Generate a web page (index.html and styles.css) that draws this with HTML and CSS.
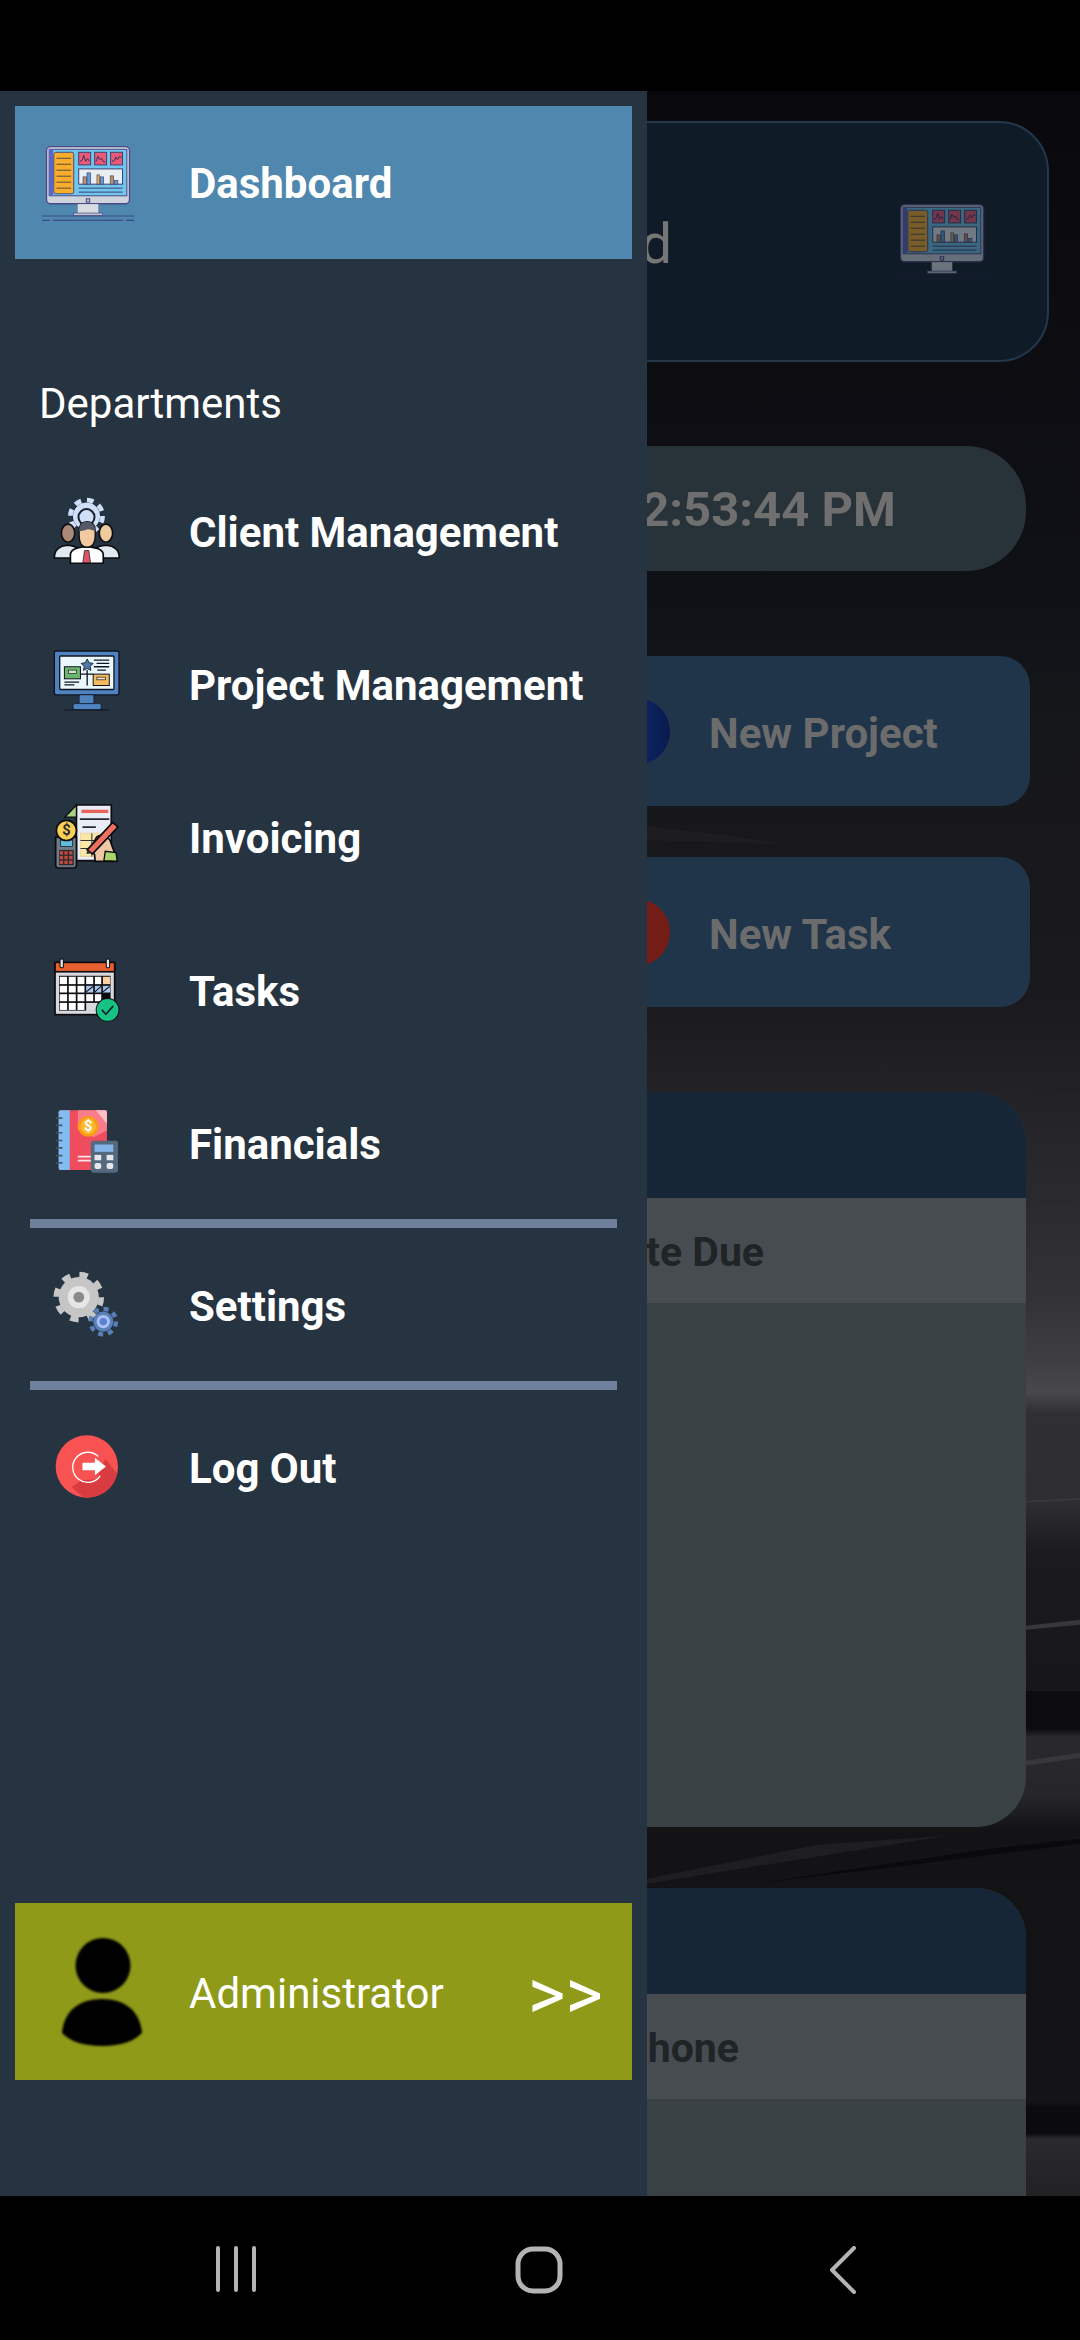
FILE: index.html
```html
<!DOCTYPE html>
<html lang="en">
<head>
<meta charset="utf-8">
<title>Dashboard</title>
<link rel="stylesheet" href="styles.css">
</head>
<body>
<svg class="defs" width="0" height="0" aria-hidden="true">
  <symbol id="ic-dashboard" viewBox="30 40 285 235">
    <rect x="46" y="45" width="250" height="172" rx="12" fill="#cfd3dc" stroke="#4a4a86" stroke-width="4"/>
    <rect x="54" y="53" width="234" height="140" fill="#6fc6ee" stroke="#4a4a86" stroke-width="3"/>
    <rect x="54" y="53" width="12" height="140" fill="#5f63c6"/>
    <rect x="68" y="62" width="60" height="125" rx="6" fill="#f8ae2a" stroke="#4a4a86" stroke-width="3"/>
    <g stroke="#5a4a40" stroke-width="3"><path d="M76 80h44M76 98h44M76 116h44M76 134h44M76 152h44M76 170h44"/></g>
    <g fill="#ec5a78" stroke="#3f3f70" stroke-width="3">
      <rect x="143" y="62" width="36" height="38"/><rect x="191" y="62" width="36" height="38"/><rect x="239" y="62" width="36" height="38"/>
    </g>
    <g fill="none" stroke="#30305f" stroke-width="3">
      <path d="M147 90l7-5 4-14 6 18 6-8 5 8M195 90l6-16 6 10 5-4 5 10 6 1M243 90l8-4 4-10 5 8 6-10 6 4"/>
    </g>
    <rect x="143" y="112" width="132" height="46" fill="#e8eef2" stroke="#3f3f70" stroke-width="3"/>
    <rect x="156" y="136" width="10" height="22" fill="#c09060" stroke="#3f3f70" stroke-width="2"/>
    <rect x="168" y="124" width="11" height="34" fill="#5f9bd8" stroke="#3f3f70" stroke-width="2"/>
    <rect x="198" y="130" width="8" height="28" fill="#f0b040" stroke="#3f3f70" stroke-width="2"/>
    <rect x="209" y="136" width="9" height="22" fill="#5f9bd8" stroke="#3f3f70" stroke-width="2"/>
    <rect x="238" y="133" width="10" height="25" fill="#c09060" stroke="#3f3f70" stroke-width="2"/>
    <rect x="251" y="147" width="10" height="11" fill="#5f9bd8" stroke="#3f3f70" stroke-width="2"/>
    <path d="M143 170h132M143 182h132" stroke="#3f3f70" stroke-width="3"/>
    <rect x="166" y="202" width="10" height="10" fill="none" stroke="#3f3f70" stroke-width="3"/>
    <rect x="140" y="218" width="62" height="27" fill="#d8dbe2"/>
    <rect x="127" y="245" width="88" height="8" fill="#bfc3cc" stroke="#4a4a86" stroke-width="2"/>
    <path class="ground" d="M33 254h277M33 267h24M66 267h210M285 267h25" stroke-width="3.5"/>
  </symbol>
</svg>

<div class="phone">
  <div class="status-bar"></div>

  <main class="stage">
    <svg class="wallpaper" viewBox="0 91 1080 2104" preserveAspectRatio="none" aria-hidden="true">
      <defs>
        <linearGradient id="wall" x1="0" y1="91" x2="0" y2="2195" gradientUnits="userSpaceOnUse">
          <stop offset="0" stop-color="#09090d"/>
          <stop offset=".24" stop-color="#101116"/>
          <stop offset=".29" stop-color="#15161a"/>
          <stop offset=".43" stop-color="#1a1a1e"/>
          <stop offset=".48" stop-color="#232327"/>
          <stop offset=".575" stop-color="#333337"/>
          <stop offset=".603" stop-color="#3f3f43"/>
          <stop offset=".618" stop-color="#48484c"/>
          <stop offset=".628" stop-color="#303034"/>
          <stop offset=".67" stop-color="#2e2e32"/>
          <stop offset=".695" stop-color="#1b1b1e"/>
          <stop offset=".76" stop-color="#17171a"/>
          <stop offset=".76" stop-color="#0c0c0f"/>
          <stop offset=".778" stop-color="#0c0c0f"/>
          <stop offset=".782" stop-color="#2a2a2e"/>
          <stop offset=".81" stop-color="#26262a"/>
          <stop offset=".826" stop-color="#131316"/>
          <stop offset=".955" stop-color="#141416"/>
          <stop offset=".958" stop-color="#0b0b0e"/>
          <stop offset=".97" stop-color="#0b0b0e"/>
          <stop offset=".973" stop-color="#2a2a2d"/>
          <stop offset="1" stop-color="#222225"/>
        </linearGradient>
      </defs>
      <rect x="0" y="91" width="1080" height="2104" fill="url(#wall)"/>
      <path d="M647 826l90 10 50 8-140-4z" fill="#1d1d21"/>
      <path d="M780 1062l110 3 190 22v5l-150-16z" fill="#212125"/>
      <path d="M647 1878l170-34 130-9-300 48z" fill="#1e1e22"/>
      <path d="M760 1882l230-34 90-10v5l-200 25z" fill="#0a0a0d"/>
      <path d="M1026 1625l54-6v5l-54 5zM1026 1500l54-3v2l-54 3zM1026 1760l54-8v5l-54 8z" fill="#38383c"/>
      <path d="M1026 1200l54-6v6l-54 6zM1026 2150l54-5v3l-54 4z" fill="#2a2a2e"/>
    </svg>

    <div class="content">
      <section class="hero">
        <span class="hero-title">Dashboard</span>
        <svg class="hero-icon"><use href="#ic-dashboard"/></svg>
      </section>

      <div class="clock"><span>12:53:44 PM</span></div>

      <div class="action">
        <span class="action-dot action-dot-blue"></span>
        <span class="action-label">New Project</span>
      </div>
      <div class="action">
        <span class="action-dot action-dot-red"></span>
        <span class="action-label">New Task</span>
      </div>

      <section class="table table-tasks">
        <div class="table-head"></div>
        <div class="table-cols table-cols-date"><span>Date Due</span></div>
        <div class="table-body"></div>
      </section>

      <section class="table table-clients">
        <div class="table-head"></div>
        <div class="table-cols table-cols-phone"><span>Phone</span></div>
        <div class="table-body"></div>
      </section>
    </div>

    <nav class="drawer">
      <a class="item item-active">
        <svg class="icon-dashboard"><use href="#ic-dashboard"/></svg>
        <span>Dashboard</span>
      </a>

      <h2 class="drawer-title">Departments</h2>

      <a class="item">
        <svg class="icon" viewBox="70 48 200 200">
          <circle cx="170" cy="105" r="42" fill="#cfe0f8" stroke="#1c2130" stroke-width="3"/>
          <circle cx="170" cy="105" r="48" fill="none" stroke="#cfe0f8" stroke-width="14" stroke-dasharray="20 17.7"/>
          <circle cx="170" cy="108" r="24" fill="none" stroke="#1c2130" stroke-width="6"/>
          <path d="M74 230c0-24 14-36 40-38 26 2 44 14 44 38z" fill="#dfe9ee" stroke="#0c0c10" stroke-width="5"/>
          <path d="M182 230c0-24 20-36 46-38 26 2 40 14 40 38z" fill="#dfe9ee" stroke="#0c0c10" stroke-width="5"/>
          <ellipse cx="115" cy="156" rx="20" ry="27" fill="#a98a78" stroke="#0c0c10" stroke-width="5"/>
          <ellipse cx="228" cy="156" rx="20" ry="27" fill="#eecb9c" stroke="#0c0c10" stroke-width="5"/>
          <path d="M122 246v-26c0-14 20-22 48-24 28 2 50 10 50 24v26z" fill="#fff" stroke="#0c0c10" stroke-width="5"/>
          <path d="M164 208h13l5 36h-23z" fill="#d9566a" stroke="#0c0c10" stroke-width="2"/>
          <path d="M148 150c0-18 8-28 24-28s24 10 24 28v14c0 22-10 34-24 34s-24-12-24-34z" fill="#f2c9a0" stroke="#0c0c10" stroke-width="4"/>
          <path d="M148 150c0-18 8-28 24-28s24 10 24 28l-12-4-10-2-12 4z" fill="#555a66"/>
        </svg>
        <span>Client Management</span>
      </a>

      <a class="item">
        <svg class="icon" viewBox="70 518 200 200">
          <rect x="74" y="521" width="193" height="131" rx="6" fill="#4f83c0" stroke="#101420" stroke-width="4"/>
          <rect x="90" y="536" width="162" height="100" rx="3" fill="#eaf8fe" stroke="#101420" stroke-width="4"/>
          <rect x="104" y="568" width="48" height="36" fill="#6cb66e" stroke="#101420" stroke-width="3"/>
          <rect x="116" y="578" width="24" height="10" fill="#cfe8c8" stroke="#101420" stroke-width="2"/>
          <rect x="190" y="590" width="48" height="34" fill="#f5ba5c" stroke="#101420" stroke-width="3"/>
          <rect x="201" y="599" width="26" height="8" fill="#fbe4b8" stroke="#101420" stroke-width="2"/>
          <path d="M172 545l6 11 12 2-9 9 2 12-11-6-11 6 2-12-9-9 12-2z" fill="#4e7aa7" stroke="#101420" stroke-width="2.5"/>
          <path d="M172 578v46M152 590h38M192 548h46M200 558h38M192 568h46M202 578h26M104 614h44M104 622h30" stroke="#101420" stroke-width="4" fill="none"/>
          <rect x="148" y="652" width="44" height="26" fill="#4f83c0" stroke="#101420" stroke-width="2"/>
          <rect x="130" y="678" width="84" height="18" rx="6" fill="#4f83c0" stroke="#101420" stroke-width="2"/>
          <path d="M105 697h132" stroke="#101420" stroke-width="3"/>
        </svg>
        <span>Project Management</span>
      </a>

      <a class="item">
        <svg class="icon" viewBox="70 68 200 200">
          <path d="M140 74h104v166h-104z" fill="#e9eef6" stroke="#0c0c10" stroke-width="5"/>
          <path d="M140 74l-34 36h34z" fill="#a8d080" stroke="#0c0c10" stroke-width="4"/>
          <rect x="155" y="88" width="80" height="10" fill="#e8645a"/>
          <path d="M150 116h88M158 140h40" stroke="#2a2a30" stroke-width="5"/>
          <rect x="152" y="158" width="66" height="70" fill="#fbe8a8" stroke="#e8d090" stroke-width="2"/>
          <path d="M152 180h66M152 204h66M186 158v70" stroke="#30303a" stroke-width="3"/>
          <path d="M78 170h62v84q0 8-8 8H86q-8 0-8-8z" fill="#717b88" stroke="#0c0c10" stroke-width="5"/>
          <rect x="92" y="178" width="36" height="20" fill="#63bce0" stroke="#0c0c10" stroke-width="2"/>
          <rect x="88" y="208" width="44" height="46" fill="#2e2a30"/>
          <g fill="#c04a3e"><rect x="90" y="212" width="10" height="10"/><rect x="104" y="212" width="10" height="10"/><rect x="118" y="212" width="10" height="10"/><rect x="90" y="226" width="10" height="10"/><rect x="104" y="226" width="10" height="10"/><rect x="118" y="226" width="10" height="10"/><rect x="90" y="240" width="10" height="10"/><rect x="104" y="240" width="10" height="10"/><rect x="118" y="240" width="10" height="10"/></g>
          <circle cx="110" cy="150" r="30" fill="#fbd155" stroke="#0c0c10" stroke-width="5"/>
          <text class="coin" x="110" y="164" text-anchor="middle">$</text>
          <path d="M200 170c14-12 40-2 44 20 6 20 14 30 18 52h-66l-2-20-12-18z" fill="#efc9a6" stroke="#0c0c10" stroke-width="5"/>
          <path d="M222 240l4-28 32 4 4 26z" fill="#a8d66c" stroke="#0c0c10" stroke-width="4"/>
          <path d="M172 208l76-82 16 14-76 80z" fill="#ef7060" stroke="#0c0c10" stroke-width="5"/>
          <path d="M172 208l-2 12 16-2z" fill="#30303a"/>
        </svg>
        <span>Invoicing</span>
      </a>

      <a class="item">
        <svg class="icon" viewBox="70 525 200 200">
          <rect x="76" y="548" width="178" height="152" fill="#d8dae0" stroke="#0c0c10" stroke-width="5"/>
          <rect x="76" y="544" width="178" height="28" fill="#e8602f" stroke="#0c0c10" stroke-width="5"/>
          <rect x="91" y="534" width="10" height="26" rx="4" fill="#e6e6e6" stroke="#0c0c10" stroke-width="3"/>
          <rect x="229" y="534" width="10" height="26" rx="4" fill="#e6e6e6" stroke="#0c0c10" stroke-width="3"/>
          <rect x="88" y="584" width="154" height="104" fill="#0c0c10"/>
          <g fill="#fff">
            <rect x="90" y="587" width="22" height="22"/><rect x="117" y="587" width="21" height="22"/><rect x="143" y="587" width="21" height="22"/><rect x="169" y="587" width="21" height="22"/><rect x="195" y="587" width="19" height="22"/>
            <rect x="90" y="614" width="22" height="20"/><rect x="117" y="614" width="21" height="20"/><rect x="143" y="614" width="21" height="20"/>
            <rect x="90" y="639" width="22" height="21"/><rect x="117" y="639" width="21" height="21"/><rect x="143" y="639" width="21" height="21"/><rect x="169" y="639" width="21" height="21"/><rect x="195" y="639" width="19" height="21"/>
            <rect x="90" y="665" width="22" height="21"/><rect x="117" y="665" width="21" height="21"/><rect x="143" y="665" width="21" height="21"/>
          </g>
          <rect x="219" y="587" width="22" height="22" fill="#fbd0a4"/>
          <g fill="#a8c8ee">
            <rect x="169" y="614" width="21" height="20"/><rect x="195" y="614" width="19" height="20"/><rect x="219" y="614" width="22" height="20"/>
          </g>
          <path d="M169 632l20-16M195 632l18-16M219 632l20-16" stroke="#0c0c10" stroke-width="3"/>
          <rect x="169" y="665" width="50" height="24" fill="#d8dae0"/>
          <circle cx="233" cy="686" r="34" fill="#16c383" stroke="#0c0c10" stroke-width="3"/>
          <path d="M216 686l12 13 22-25" fill="none" stroke="#123" stroke-width="5"/>
        </svg>
        <span>Tasks</span>
      </a>

      <a class="item">
        <svg class="icon" viewBox="70 58 200 200">
          <rect x="87" y="62" width="144" height="178" rx="6" fill="#ef4d5d"/>
          <path d="M93 62h27v178h-27q-6 0-6-6V68q0-6 6-6z" fill="#81bdf0"/>
          <path d="M144 62h81q6 0 6 6v54l-40 20-47-24z" fill="#f77d8a"/>
          <path d="M198 62h27q6 0 6 6v34z" fill="#fbc0c6"/>
          <path d="M80 85h18M80 107h18M80 129h18M80 152h18M80 174h18M80 197h18M80 219h18" stroke="#465a6e" stroke-width="5"/>
          <circle cx="175" cy="110" r="31" fill="#fb9c14"/>
          <circle cx="175" cy="110" r="23" fill="#fdb92c"/>
          <text class="coin coin-light" x="175" y="124" text-anchor="middle">$</text>
          <path d="M144 200h42M144 212h42" stroke="#ffe6ea" stroke-width="5"/>
          <rect x="183" y="153" width="81" height="95" rx="8" fill="#54697d"/>
          <rect x="194" y="164" width="56" height="22" fill="#82b4e8"/>
          <g fill="#e4e8ec"><rect x="194" y="195" width="20" height="16"/><rect x="230" y="195" width="20" height="16"/><rect x="194" y="219" width="20" height="18" rx="6"/><rect x="230" y="219" width="20" height="18" rx="6"/></g>
        </svg>
        <span>Financials</span>
      </a>

      <hr class="rule rule-tight">

      <a class="item item-settings">
        <svg class="icon" viewBox="70 30 200 200">
          <circle cx="147" cy="108" r="60" fill="#c6c6c6"/>
          <circle cx="147" cy="108" r="67" fill="none" stroke="#c6c6c6" stroke-width="17" stroke-dasharray="25 27.6"/>
          <circle cx="147" cy="108" r="33" fill="#e6e6e6"/>
          <circle cx="147" cy="108" r="16" fill="#8a8a8a"/>
          <circle cx="220" cy="181" r="30" fill="#5a80b8"/>
          <circle cx="220" cy="181" r="38" fill="none" stroke="#5a80b8" stroke-width="13" stroke-dasharray="15 14.8"/>
          <circle cx="220" cy="181" r="20" fill="#a9c0f5"/>
          <circle cx="220" cy="181" r="11" fill="#5c80d0"/>
        </svg>
        <span>Settings</span>
      </a>

      <hr class="rule">

      <a class="item item-last">
        <svg class="icon" viewBox="70 518 200 200">
          <circle cx="171" cy="618" r="93" fill="#f85252"/>
          <path d="M200 655l-44 4-30 20 34 31c52 4 90-22 102-70l-36-45z" fill="#d93c40"/>
          <path d="M205 588a45 45 0 1 0 6 58" fill="none" stroke="#fff" stroke-width="4"/>
          <path d="M158 607h37v-15l33 26-33 26v-15h-37z" fill="#fff"/>
        </svg>
        <span>Log Out</span>
      </a>

      <a class="account">
        <svg class="avatar" viewBox="0 0 80 108">
          <ellipse cx="41" cy="27.5" rx="27.5" ry="27.5" fill="#000"/>
          <path d="M0 95C2 72 18 61 40 61s38 11 40 34c-8 8-20 13-40 13S8 103 0 95z" fill="#000"/>
        </svg>
        <span class="account-name">Administrator</span>
        <span class="account-more">&gt;&gt;</span>
      </a>
    </nav>
  </main>

  <footer class="nav-bar">
    <svg class="nav-recent" viewBox="0 0 41 46"><path d="M2 2v42M20 2v42M38 2v42" fill="none" stroke="#b4b4b4" stroke-width="4" stroke-linecap="round"/></svg>
    <svg class="nav-home" viewBox="0 0 48 48"><rect x="3" y="3" width="42" height="42" rx="15" fill="none" stroke="#b4b4b4" stroke-width="5"/></svg>
    <svg class="nav-back" viewBox="0 0 28 48"><path d="M25 2L3 24l22 22" fill="none" stroke="#b4b4b4" stroke-width="4" stroke-linecap="round" stroke-linejoin="round"/></svg>
  </footer>
</div>
</body>
</html>
```

FILE: styles.css
```css
* { box-sizing: border-box; }

html, body {
  margin: 0;
  padding: 0;
  background: #000;
}

body {
  font-family: Roboto, "Liberation Sans", sans-serif;
  color: #fff;
}

.defs { position: absolute; }

.ground { stroke: var(--ground, #3c4a86); }

.phone {
  width: 1080px;
  height: 2340px;
  display: flex;
  flex-direction: column;
  overflow: hidden;
}

.status-bar {
  height: 91px;
  flex: none;
  background: #000;
}

.stage {
  position: relative;
  height: 2105px;
  flex: none;
  overflow: hidden;
}

.wallpaper {
  position: absolute;
  inset: 0;
  width: 100%;
  height: 100%;
  display: block;
}

/* Content dimmed behind the drawer */
.content {
  position: relative;
  display: flex;
  flex-direction: column;
  padding: 30px 0 0 30px;
}

.hero {
  width: 1019px;
  height: 241px;
  flex: none;
  display: flex;
  align-items: center;
  background: #101b28;
  border: 2px solid #24384c;
  border-radius: 50px;
}

.hero-title {
  width: 640px;
  padding-top: 5px;
  text-align: right;
  font-size: 56px;
  color: #767676;
  font-weight: 400;
  white-space: nowrap;
}

.hero-icon {
  --ground: #1a1f3a;
  width: 95px;
  height: 78px;
  margin-left: 223px;
  margin-top: 0;
  opacity: .45;
}

.clock {
  width: 996px;
  height: 125px;
  flex: none;
  margin-top: 84px;
  padding-right: 130px;
  padding-top: 2px;
  display: flex;
  align-items: center;
  justify-content: flex-end;
  background: #283239;
  border-radius: 60px;
  font-size: 49px;
  font-weight: 700;
  color: #6f6f6f;
}

.action {
  width: 1000px;
  height: 150px;
  flex: none;
  margin-top: 51px;
  padding-left: 573px;
  display: flex;
  align-items: center;
  gap: 39px;
  background: #20354a;
  border-radius: 30px;
}

.clock + .action { margin-top: 85px; }

.action-dot {
  width: 67px;
  height: 67px;
  flex: none;
  border-radius: 50%;
}

.action-dot-blue { background: linear-gradient(90deg, #10327a, #0a1a50); }
.action-dot-red { background: #741d17; }

.action-label {
  padding-top: 4px;
  font-size: 42px;
  font-weight: 700;
  color: #6c6c6c;
  white-space: nowrap;
}

.table {
  width: 996px;
  flex: none;
  display: flex;
  flex-direction: column;
  border-radius: 50px;
  overflow: hidden;
  background: #3a4144;
}

.table-tasks { height: 735px; margin-top: 85px; }
.table-clients { height: 400px; margin-top: 61px; }

.table-head {
  height: 106px;
  flex: none;
  background: #162637;
}

.table-cols {
  height: 105px;
  flex: none;
  display: flex;
  align-items: center;
  justify-content: flex-end;
  padding-top: 3px;
  background: #474c50;
  font-size: 41px;
  font-weight: 700;
  color: #1f2426;
}

.table-cols-date { padding-right: 262px; }
.table-cols-phone { padding-right: 287px; }

.table-body { flex: 1; }

/* Drawer */
.drawer {
  position: absolute;
  left: 0;
  top: 0;
  bottom: 0;
  width: 647px;
  padding: 15px 15px 116px;
  display: flex;
  flex-direction: column;
  background: #263340;
}

.item {
  height: 153px;
  flex: none;
  display: flex;
  align-items: center;
  padding-left: 38px;
  font-size: 42px;
  font-weight: 700;
  color: #fff;
  white-space: nowrap;
}

.item-active {
  padding-left: 26px;
  padding-top: 2px;
  background: #5087ae;
}

.item-settings { padding-top: 4px; }

.item-last { margin-top: 2px; }

.icon-dashboard {
  width: 95px;
  height: 78px;
  margin-right: 53px;
  flex: none;
}

.icon {
  width: 67px;
  height: 67px;
  margin-right: 69px;
  margin-bottom: 5px;
  flex: none;
}

.coin {
  font-family: Roboto, sans-serif;
  font-size: 44px;
  font-weight: 700;
  fill: #2a2a30;
}

.coin-light { fill: #fff; }

.drawer-title {
  height: 44px;
  margin: 123px 0 30px;
  padding-left: 24px;
  font-size: 42px;
  line-height: 44px;
  font-weight: 400;
  color: #fff;
}

.rule {
  width: 587px;
  height: 9px;
  flex: none;
  margin: 0 0 0 15px;
  border: 0;
  background: #6e809b;
}

.rule-tight { margin-top: -2px; }

.account {
  height: 177px;
  flex: none;
  margin-top: auto;
  display: flex;
  align-items: center;
  background: #8f9a18;
}

.avatar {
  width: 80px;
  height: 108px;
  flex: none;
  margin-left: 47px;
  margin-right: 47px;
  filter: blur(1px);
}

.account-name {
  padding-top: 3px;
  font-size: 42px;
  font-weight: 400;
  white-space: nowrap;
}

.account-more {
  margin-left: auto;
  margin-right: 29px;
  margin-top: 6px;
  font-size: 72px;
  font-weight: 400;
  line-height: 1;
}

/* System navigation */
.nav-bar {
  flex: 1;
  display: flex;
  align-items: flex-start;
  padding: 50px 0 0 216px;
  background: #000;
}

.nav-recent { width: 41px; height: 46px; margin-right: 258px; }
.nav-home { width: 48px; height: 48px; margin-right: 266px; }
.nav-back { width: 28px; height: 48px; }
```
